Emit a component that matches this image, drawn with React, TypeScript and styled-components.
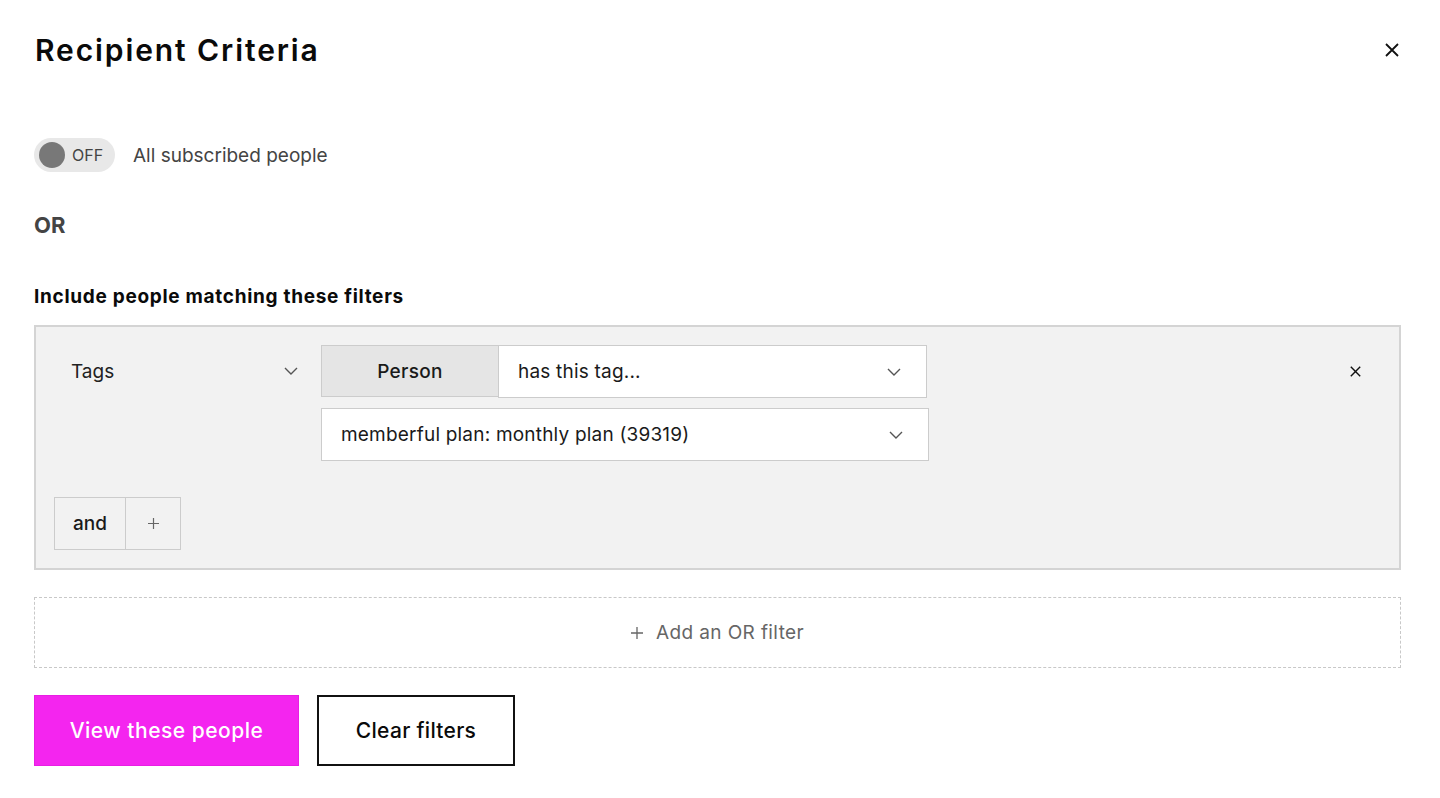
import React from 'react';
import styled, { createGlobalStyle } from 'styled-components';

const GlobalStyle = createGlobalStyle`
  html, body {
    margin: 0;
    padding: 0;
    background: #ffffff;
  }
  body {
    font-family: Inter, "Noto Sans", Arial, sans-serif;
    color: #111;
  }
`;

const Chevron: React.FC = () => (
  <svg width="14" height="8" viewBox="0 0 14 8" fill="none">
    <path d="M1 1l6 6 6-6" stroke="#555" strokeWidth="1.4" />
  </svg>
);

const Cross: React.FC<{ size: number; weight: number }> = ({ size, weight }) => (
  <svg width={size} height={size} viewBox="0 0 14 14" fill="none">
    <path d="M1 1l12 12M13 1L1 13" stroke="#111" strokeWidth={weight} />
  </svg>
);

const Plus: React.FC<{ size: number; color: string }> = ({ size, color }) => (
  <svg width={size} height={size} viewBox="0 0 12 12" fill="none">
    <path d="M6 0v12M0 6h12" stroke={color} strokeWidth="1.3" />
  </svg>
);

const App: React.FC = () => (
  <>
    <GlobalStyle />
    <Page>
      <Header>
        <Title>Recipient Criteria</Title>
        <CloseButton aria-label="Close">
          <Cross size={14} weight={1.8} />
        </CloseButton>
      </Header>

      <ToggleRow>
        <Toggle>
          <Knob />
          <ToggleLabel>OFF</ToggleLabel>
        </Toggle>
        <ToggleText>All subscribed people</ToggleText>
      </ToggleRow>

      <OrLabel>OR</OrLabel>

      <SectionTitle>Include people matching these filters</SectionTitle>

      <FilterBox>
        <FilterRow>
          <FieldSelect>
            <span>Tags</span>
            <Chevron />
          </FieldSelect>
          <Conditions>
            <ConditionLine>
              <Segment>Person</Segment>
              <Select $width={429}>
                <span>has this tag...</span>
                <Chevron />
              </Select>
            </ConditionLine>
            <Select $width={608}>
              <span>memberful plan: monthly plan (39319)</span>
              <Chevron />
            </Select>
          </Conditions>
          <RemoveButton aria-label="Remove filter">
            <Cross size={11} weight={1.8} />
          </RemoveButton>
        </FilterRow>
        <AndGroup>
          <AndButton>and</AndButton>
          <PlusButton aria-label="Add condition">
            <Plus size={11} color="#666" />
          </PlusButton>
        </AndGroup>
      </FilterBox>

      <AddOrFilter>
        <Plus size={12} color="#666" />
        Add an OR filter
      </AddOrFilter>

      <Actions>
        <PrimaryButton>View these people</PrimaryButton>
        <SecondaryButton>Clear filters</SecondaryButton>
      </Actions>
    </Page>
  </>
);

const Page = styled.div`
  display: flex;
  flex-direction: column;
  padding: 30px 39px 0 34px;
`;

const Header = styled.div`
  display: flex;
  justify-content: space-between;
  align-items: center;
  height: 40px;
`;

const Title = styled.h1`
  margin: 0 0 0 1px;
  font-size: 30px;
  font-weight: 600;
  letter-spacing: 1.9px;
  color: #0a0a0a;
`;

const CloseButton = styled.button`
  display: flex;
  align-items: center;
  justify-content: center;
  background: none;
  border: 0;
  padding: 0;
  margin-right: 2px;
  cursor: pointer;
`;

const ToggleRow = styled.div`
  display: flex;
  align-items: center;
  gap: 18px;
  margin-top: 68px;
`;

const Toggle = styled.div`
  display: flex;
  align-items: center;
  gap: 7px;
  width: 81px;
  height: 34px;
  box-sizing: border-box;
  padding: 0 5px;
  border-radius: 17px;
  background: #e8e8e8;
`;

const Knob = styled.span`
  width: 26px;
  height: 26px;
  border-radius: 50%;
  background: #787878;
`;

const ToggleLabel = styled.span`
  font-size: 16px;
  color: #444;
`;

const ToggleText = styled.span`
  font-size: 19px;
  color: #444;
`;

const OrLabel = styled.div`
  margin-top: 40px;
  font-size: 22px;
  font-weight: 700;
  color: #444;
`;

const SectionTitle = styled.div`
  margin-top: 47px;
  font-size: 19px;
  font-weight: 700;
  letter-spacing: 0.7px;
  color: #0a0a0a;
`;

const FilterBox = styled.div`
  display: flex;
  flex-direction: column;
  gap: 36px;
  margin-top: 17px;
  padding: 18px;
  background: #f2f2f2;
  border: 2px solid #d4d4d4;
`;

const FilterRow = styled.div`
  display: flex;
  align-items: flex-start;
`;

const FieldSelect = styled.div`
  display: flex;
  align-items: center;
  justify-content: space-between;
  width: 227px;
  height: 52px;
  padding: 0 23px 0 17px;
  font-size: 19px;
  color: #222;
`;

const Conditions = styled.div`
  display: flex;
  flex-direction: column;
  gap: 10px;
`;

const ConditionLine = styled.div`
  display: flex;
`;

const Segment = styled.div`
  display: flex;
  align-items: center;
  justify-content: center;
  width: 177px;
  height: 52px;
  box-sizing: border-box;
  background: #e5e5e5;
  border: 1px solid #cccccc;
  border-right: 0;
  font-size: 19px;
  font-weight: 500;
  letter-spacing: 0.3px;
  color: #1a1a1a;
`;

const Select = styled.div<{ $width: number }>`
  display: flex;
  align-items: center;
  justify-content: space-between;
  width: ${(p) => p.$width}px;
  height: 53px;
  box-sizing: border-box;
  padding: 0 25px 0 19px;
  background: #ffffff;
  border: 1px solid #cccccc;
  font-size: 19px;
  letter-spacing: 0.2px;
  color: #1a1a1a;
`;

const RemoveButton = styled.button`
  display: flex;
  align-items: center;
  justify-content: center;
  margin-left: auto;
  margin-right: 20px;
  height: 52px;
  background: none;
  border: 0;
  padding: 0;
  cursor: pointer;
`;

const AndGroup = styled.div`
  display: flex;
`;

const AndButton = styled.button`
  width: 72px;
  height: 53px;
  background: #f2f2f2;
  border: 1px solid #cccccc;
  font-family: inherit;
  font-size: 19px;
  font-weight: 500;
  color: #1a1a1a;
`;

const PlusButton = styled.button`
  display: flex;
  align-items: center;
  justify-content: center;
  width: 56px;
  height: 53px;
  margin-left: -1px;
  background: #f2f2f2;
  border: 1px solid #cccccc;
`;

const AddOrFilter = styled.div`
  display: flex;
  align-items: center;
  justify-content: center;
  gap: 13px;
  height: 69px;
  margin-top: 27px;
  border: 1.5px dashed #c8c8c8;
  font-size: 19px;
  letter-spacing: 0.4px;
  color: #666;
`;

const Actions = styled.div`
  display: flex;
  gap: 18px;
  margin-top: 27px;
`;

const PrimaryButton = styled.button`
  width: 265px;
  height: 71px;
  background: #f425ef;
  border: 1px solid #e81ee3;
  color: #ffffff;
  font-family: inherit;
  font-size: 21px;
  font-weight: 500;
  letter-spacing: 0.5px;
  cursor: pointer;
`;

const SecondaryButton = styled.button`
  width: 198px;
  height: 71px;
  background: #ffffff;
  border: 2px solid #111;
  color: #0a0a0a;
  font-family: inherit;
  font-size: 21px;
  font-weight: 500;
  letter-spacing: 0.3px;
  cursor: pointer;
`;

export default App;
